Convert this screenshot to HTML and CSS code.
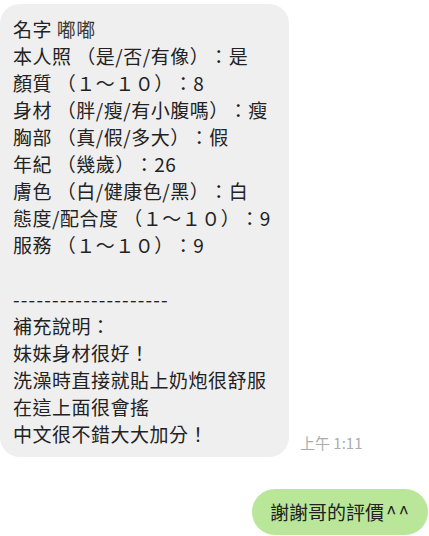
FILE: index.html
```html
<!DOCTYPE html>
<html lang="zh-Hant">
<head>
  <meta charset="UTF-8" />
  <meta name="viewport" content="width=device-width, initial-scale=1.0"/>
  <title>聊天</title>
  <link rel="stylesheet" href="styles.css">
</head>
<body>

  <div class="chat">

    <!-- 對方訊息 -->
    <div class="row in">
      <div class="bubble gray">
        <div>名字 <span class="nick">嘟嘟</span></div>
        <div>本人照 （是/否/有像）：是</div>
        <div>顏質 （１～１０）：8</div>
        <div>身材 （胖/瘦/有小腹嗎）：瘦</div>
        <div>胸部 （真/假/多大）：假</div>
        <div>年紀 （幾歲）：26</div>
        <div>膚色 （白/健康色/黑）：白</div>
        <div>態度/配合度 （１～１０）：9</div>
        <div>服務 （１～１０）：9</div>
        <div>&nbsp;</div>
        <div class="dashes">--------------------</div>
        <div>補充說明：</div>
        <div>妹妹身材很好！</div>
        <div>洗澡時直接就貼上奶炮很舒服</div>
        <div>在這上面很會搖</div>
        <div>中文很不錯大大加分！</div>
      </div>
      <span class="time">上午 1:11</span>
    </div>

    <!-- 自己的訊息 -->
    <div class="row out">
      <div class="bubble green">謝謝哥的評價<span class="carets">^^</span></div>
    </div>

  </div>

</body>
</html>
```

FILE: styles.css
```css
* {
  margin: 0;
  padding: 0;
  box-sizing: border-box;
}

body {
  background: #fff;
  color: #222;
  font-family: "Noto Sans CJK TC", "Noto Sans", sans-serif;
  font-size: 19px;
  text-spacing-trim: space-all;
}

.chat {
  display: flex;
  flex-direction: column;
  padding-top: 4px;
}

.row {
  display: flex;
  align-items: flex-end;
}

.row.out {
  justify-content: flex-end;
  margin-top: 32px;
  padding-right: 1px;
}

.bubble {
  line-height: 27px;
  white-space: nowrap;
}

.bubble.gray {
  width: 289px;
  background: #efefef;
  border-radius: 20px;
  padding: 11px 10px 10px 13px;
  letter-spacing: 0.5px;
}

.nick {
  color: #3a3a3a;
}

.dashes {
  letter-spacing: 1.2px;
}

.time {
  margin-left: 11px;
  margin-bottom: 4px;
  font-size: 15px;
  color: #adadad;
}

.bubble.green {
  height: 46px;
  line-height: 46px;
  background: #b9e698;
  border-radius: 23px;
  padding: 0 17px 0 18px;
}

.carets {
  letter-spacing: 2px;
  margin-left: 2px;
}
```
